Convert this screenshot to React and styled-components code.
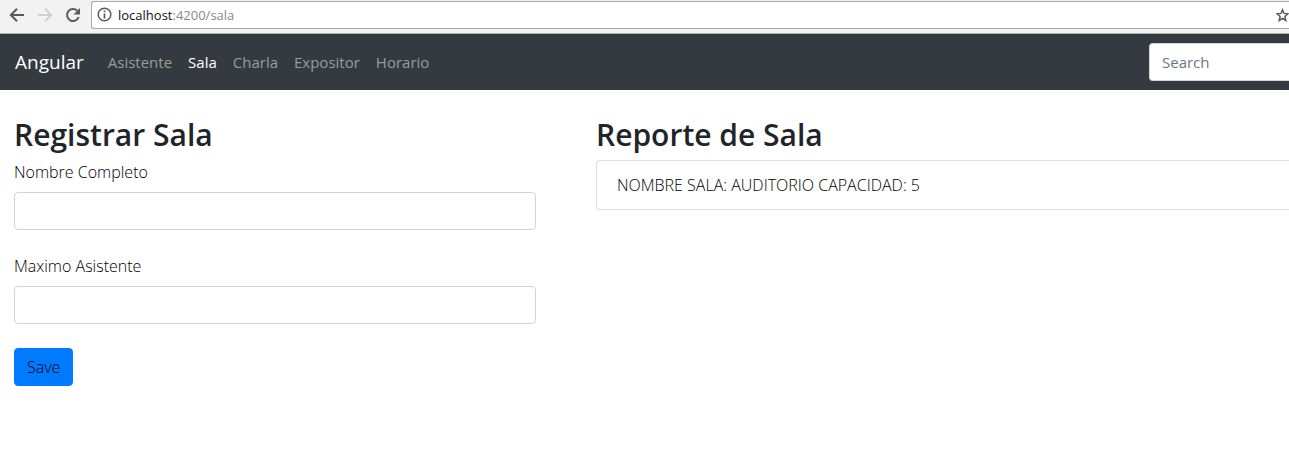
import React from "react";
import styled, { createGlobalStyle } from "styled-components";

const GlobalStyle = createGlobalStyle`
  *, *::before, *::after { box-sizing: border-box; }
  body {
    margin: 0;
    background: #fff;
    color: #212529;
    font-family: "Segoe UI", "Open Sans", "Noto Sans", sans-serif;
    font-size: 15px;
    line-height: 24px;
  }
  button, input { font: inherit; }
`;

const BrowserBar = styled.div`
  display: flex;
  align-items: center;
  height: 34px;
  padding: 0 0 4px 9px;
  background: #f2f2f2;
  border-bottom: 1px solid #b0b3b3;
`;

const IconButton = styled.button`
  display: flex;
  flex: none;
  margin: 0 12px 0 0;
  padding: 0;
  border: 0;
  background: none;
  color: ${(p) => (p.disabled ? "#cfcfcf" : "#5a5a5a")};
`;

const AddressBox = styled.div`
  display: flex;
  flex: 1;
  align-items: center;
  gap: 6px;
  height: 28px;
  margin-left: -3px;
  padding-left: 5px;
  overflow: hidden;
  background: #fff;
  border: 1px solid #a9a9a9;
  border-right: 0;
  border-radius: 3px 0 0 3px;
  color: #5a5a5a;
`;

const Address = styled.span`
  flex: 1;
  color: #888;
  font-size: 13px;
  line-height: 20px;
`;

const Host = styled.span`
  color: #111;
`;

const StarButton = styled(IconButton)`
  width: 13px;
  margin: 0;
`;

const Navbar = styled.nav`
  display: flex;
  align-items: center;
  height: 56px;
  padding-left: 15px;
  background: #343a40;
`;

const Brand = styled.a`
  margin-right: 24px;
  color: #fff;
  font-size: 19px;
  line-height: 30px;
  text-decoration: none;
`;

const NavList = styled.ul`
  display: flex;
  flex: 1;
  gap: 16px;
  margin: 0;
  padding: 0;
  list-style: none;
`;

const NavLink = styled.a`
  color: ${(p) => (p.$active ? "#fff" : "#999c9f")};
  text-decoration: none;
`;

const TextInput = styled.input`
  display: block;
  width: 100%;
  height: 38px;
  padding: 6px 12px;
  background: #fff;
  border: 1px solid #ced4da;
  border-radius: 4px;
  color: #495057;
  &::placeholder { color: #6c757d; opacity: 1; }
`;

const SearchInput = styled(TextInput)`
  width: 140px;
  border-right: 0;
  border-radius: 4px 0 0 4px;
`;

const Content = styled.main`
  display: grid;
  grid-template-columns: minmax(0, 522fr) minmax(0, 693fr);
  gap: 60px;
  padding: 26px 0 24px 14px;
  color: #000;
  font-size: 16px;
  font-weight: 300;
`;

const Title = styled.h2`
  margin: 0 0 6px;
  color: #212529;
  font-size: 30px;
  font-weight: 600;
  line-height: 38px;
`;

const Form = styled.form`
  display: flex;
  flex-direction: column;
  align-items: flex-start;
  gap: 24px;
`;

const Field = styled.div`
  width: 100%;
`;

const Label = styled.label`
  display: inline-block;
  margin-bottom: 8px;
`;

const SaveButton = styled.button`
  height: 38px;
  padding: 6px 12px;
  background: #007bff;
  border: 1px solid #007bff;
  border-radius: 4px;
  color: #000;
`;

const ReportList = styled.ul`
  margin: 0;
  padding: 0;
  list-style: none;
`;

const ReportItem = styled.li`
  padding: 12px 20px;
  border: 1px solid #dfdfdf;
  border-right: 0;
  border-radius: 4px 0 0 4px;
`;

const links = ["Asistente", "Sala", "Charla", "Expositor", "Horario"];

export default function App() {
  return (
    <>
      <GlobalStyle />
      <BrowserBar>
        <IconButton aria-label="Back">
          <svg width="16" height="16" viewBox="0 0 16 16" fill="none" stroke="currentColor" strokeWidth="2">
            <path d="M15 8H2.5M8 1.8 1.8 8 8 14.2" />
          </svg>
        </IconButton>
        <IconButton aria-label="Forward" disabled>
          <svg width="16" height="16" viewBox="0 0 16 16" fill="none" stroke="currentColor" strokeWidth="2">
            <path d="M1 8h12.5M8 1.8 14.2 8 8 14.2" />
          </svg>
        </IconButton>
        <IconButton aria-label="Reload">
          <svg width="17" height="16" viewBox="0 0 17 16" fill="none" stroke="currentColor" strokeWidth="2">
            <path d="M13.7 10A6 6 0 1 1 12.3 3.8" />
            <path d="M15 1v6.5H8.5z" fill="currentColor" stroke="none" />
          </svg>
        </IconButton>
        <AddressBox>
          <svg width="15" height="15" viewBox="0 0 15 15" fill="none" stroke="currentColor">
            <circle cx="7.5" cy="7.5" r="6.3" strokeWidth="1.5" />
            <path d="M7.5 6.5v5M7.5 3.6v1.7" strokeWidth="1.7" />
          </svg>
          <Address>
            <Host>localhost</Host>:4200/sala
          </Address>
          <StarButton aria-label="Bookmark">
            <svg width="14" height="14" viewBox="0 0 14 14" fill="none" stroke="currentColor" strokeWidth="1.6">
              <path d="m7 1.5 1.6 3.8 4.2.4-3.2 2.9 1 4.3L7 10.6l-3.6 2.3 1-4.3L1.2 5.7l4.2-.4z" />
            </svg>
          </StarButton>
        </AddressBox>
      </BrowserBar>
      <Navbar>
        <Brand href="#">Angular</Brand>
        <NavList>
          {links.map((name) => (
            <li key={name}>
              <NavLink href={`#${name.toLowerCase()}`} $active={name === "Sala"}>
                {name}
              </NavLink>
            </li>
          ))}
        </NavList>
        <SearchInput type="search" placeholder="Search" aria-label="Search" />
      </Navbar>
      <Content>
        <section>
          <Title>Registrar Sala</Title>
          <Form onSubmit={(e) => e.preventDefault()}>
            <Field>
              <Label htmlFor="nombre">Nombre Completo</Label>
              <TextInput id="nombre" type="text" />
            </Field>
            <Field>
              <Label htmlFor="maximo">Maximo Asistente</Label>
              <TextInput id="maximo" type="text" />
            </Field>
            <SaveButton type="submit">Save</SaveButton>
          </Form>
        </section>
        <section>
          <Title>Reporte de Sala</Title>
          <ReportList>
            <ReportItem>NOMBRE SALA: AUDITORIO CAPACIDAD: 5</ReportItem>
          </ReportList>
        </section>
      </Content>
    </>
  );
}
